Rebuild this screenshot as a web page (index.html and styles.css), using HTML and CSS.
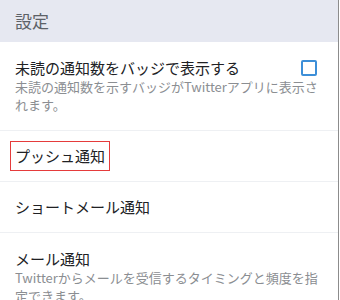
FILE: index.html
```html
<!DOCTYPE html>
<html lang="ja">
<head>
    <meta charset="UTF-8">
    <meta name="viewport" content="width=device-width, initial-scale=1.0">
    <title>設定</title>
    <link rel="stylesheet" href="styles.css">
</head>
<body>
    <div class="screen">
        <div class="header">
            <h1>設定</h1>
        </div>

        <div class="setting-row">
            <div class="row-top">
                <div class="title">未読の通知数をバッジで表示する</div>
                <span class="checkbox"></span>
            </div>
            <div class="subtitle">未読の通知数を示すバッジがTwitterアプリに表示されます。</div>
        </div>

        <div class="setting-row compact">
            <div class="title highlight">プッシュ通知</div>
        </div>

        <div class="setting-row single">
            <div class="title">ショートメール通知</div>
        </div>

        <div class="setting-row">
            <div class="title">メール通知</div>
            <div class="subtitle">Twitterからメールを受信するタイミングと頻度を指定できます。</div>
        </div>
    </div>
</body>
</html>
```

FILE: styles.css
```css
body {
    margin: 0;
    padding: 0;
    background: #ffffff;
    font-family: "Noto Sans CJK JP", "Noto Sans", sans-serif;
}

.screen {
    width: 338px;
    height: 300px;
    overflow: hidden;
    border-right: 1px solid #8c8c8c;
    background: #ffffff;
}

.header {
    height: 42px;
    background: #e6e8f1;
    padding: 0 15px;
    display: flex;
    align-items: center;
}

.header h1 {
    margin: 0;
    font-size: 17px;
    font-weight: normal;
    color: #5d6167;
    line-height: 20px;
}

.setting-row {
    padding: 16px 15px;
    border-bottom: 1px solid #eef0f3;
}

.setting-row.compact {
    padding: 10px 10px;
}

.setting-row.single {
    padding: 15px 15px;
}

.row-top {
    display: flex;
    justify-content: space-between;
    align-items: center;
}

.title {
    font-size: 15px;
    line-height: 20px;
    color: #202124;
}

.highlight {
    display: inline-block;
    padding: 4px 4px;
    border: 1px solid #e53b3b;
}

.subtitle {
    font-size: 13px;
    line-height: 18px;
    color: #8b8e92;
}

.checkbox {
    width: 12px;
    height: 12px;
    border: 2px solid #3d8fd8;
    border-radius: 2px;
    margin-right: 6px;
}
```
